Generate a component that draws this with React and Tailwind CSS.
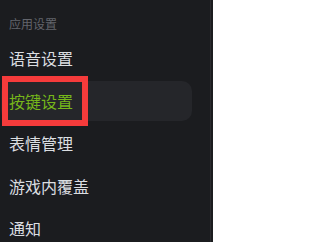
import React from 'react';

const items = ['语音设置', '按键设置', '表情管理', '游戏内覆盖', '通知'];

export default function App() {
  return (
    <div
      className="relative w-[213px] h-[242px] overflow-hidden bg-[#1b1c1f]"
      style={{ fontFamily: '"Noto Sans CJK SC", "Noto Sans", sans-serif' }}
    >
      <div className="flex flex-col pl-[1px] pr-[21px] pt-[16px]">
        <div className="h-[16px] pl-[8px] text-[12px] leading-[16px] text-[#63656c]">应用设置</div>
        <div className="flex flex-col gap-[2.5px] mt-[6px]">
          {items.map((label, i) => (
            <div
              key={label}
              className={`h-[40px] flex items-center pl-[8px] rounded-[10px] text-[16px] leading-[20px] ${
                i === 1 ? 'bg-[#25262a] text-[#76b71a]' : 'text-[#dbdee1]'
              }`}
            >
              {label}
            </div>
          ))}
        </div>
      </div>

      {/* annotation box */}
      <div className="absolute left-[2px] top-[76px] w-[86px] h-[50px] border-[6px] border-[#f53b3b]" />

      {/* scroll track */}
      <div className="absolute right-[2px] top-0 h-full w-px bg-[#2a2b2f]" />
    </div>
  );
}
